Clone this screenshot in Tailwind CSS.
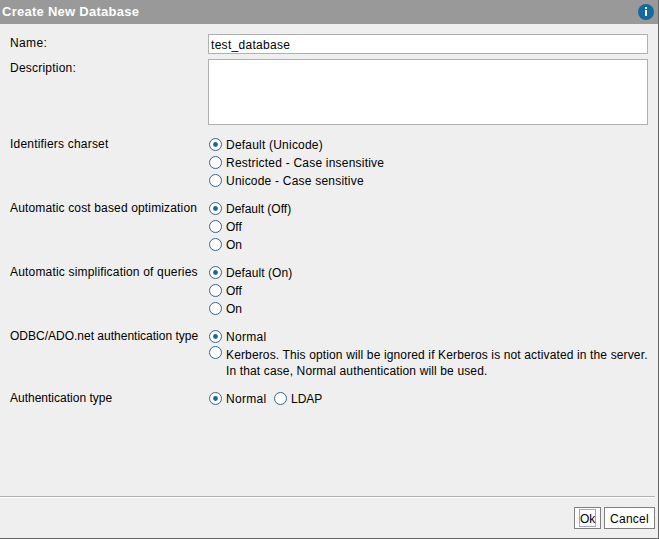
<!DOCTYPE html>
<html lang="en">
<head>
<meta charset="utf-8">
<title>Create New Database</title>
<script src="https://cdn.jsdelivr.net/npm/@tailwindcss/browser@4"></script>
</head>
<body class="bg-[#efefef]">
<svg class="hidden">
  <symbol id="off" viewBox="0 0 13 13"><circle cx="6.5" cy="6.5" r="6" fill="#fff" stroke="#34648f" /></symbol>
  <symbol id="on" viewBox="0 0 13 13"><circle cx="6.5" cy="6.5" r="6" fill="#fff" stroke="#34648f" /><circle cx="6.5" cy="6.5" r="2.4" fill="#136a9f" /></symbol>
</svg>
<div class="flex h-[539px] w-[659px] flex-col overflow-hidden border-r border-b border-[#666] bg-[#efefef] font-['Liberation_Sans',Arial,sans-serif] text-[12px] text-black whitespace-nowrap">
  <header class="flex h-6 shrink-0 items-center justify-between bg-[#999] pr-1 pl-[2px]">
    <h1 class="text-[13px] leading-6 font-bold tracking-[0.26px] text-white">Create New Database</h1>
    <svg class="size-4" viewBox="0 0 16 16"><circle cx="8" cy="8" r="8" fill="#136a9f"/><path d="M7 3h2v2H7zM7 6h2v6H7z" fill="#fff"/></svg>
  </header>
  <main class="flex grow flex-col pt-[10px] pl-[10px]">
    <div class="flex h-5"><div class="w-[198px] leading-[18px] tracking-[0.35px]">Name:</div><div class="w-[440px] border border-[#b0b0b0] bg-white pl-[2px] leading-5 tracking-[0.3px]">test_database</div></div>
    <div class="mt-[5px] flex h-[66px]"><div class="w-[198px] leading-[18px] tracking-[0.22px]">Description:</div><div class="w-[440px] border border-[#b0b0b0] bg-white"></div></div>
    <div class="mt-[11px] flex h-[54px]">
      <div class="w-[199px] leading-4 tracking-[0.2px]">Identifiers charset</div>
      <div class="leading-[18px] tracking-[0.21px]">
        <div class="flex gap-1"><svg class="mt-[2px] size-[13px]"><use href="#on"/></svg><span>Default (Unicode)</span></div>
        <div class="flex gap-1"><svg class="mt-[2px] size-[13px]"><use href="#off"/></svg><span>Restricted - Case insensitive</span></div>
        <div class="flex gap-1"><svg class="mt-[2px] size-[13px]"><use href="#off"/></svg><span>Unicode - Case sensitive</span></div>
      </div>
    </div>
    <div class="mt-[10px] flex h-[54px]">
      <div class="w-[199px] leading-4 tracking-[0.15px]">Automatic cost based optimization</div>
      <div class="leading-[18px]">
        <div class="flex gap-1"><svg class="mt-[2px] size-[13px]"><use href="#on"/></svg><span>Default (Off)</span></div>
        <div class="flex gap-1"><svg class="mt-[2px] size-[13px]"><use href="#off"/></svg><span>Off</span></div>
        <div class="flex gap-1"><svg class="mt-[2px] size-[13px]"><use href="#off"/></svg><span>On</span></div>
      </div>
    </div>
    <div class="mt-[10px] flex h-[54px]">
      <div class="w-[199px] leading-4 tracking-[0.18px]">Automatic simplification of queries</div>
      <div class="leading-[18px]">
        <div class="flex gap-1"><svg class="mt-[2px] size-[13px]"><use href="#on"/></svg><span class="tracking-[0.08px]">Default (On)</span></div>
        <div class="flex gap-1"><svg class="mt-[2px] size-[13px]"><use href="#off"/></svg><span>Off</span></div>
        <div class="flex gap-1"><svg class="mt-[2px] size-[13px]"><use href="#off"/></svg><span>On</span></div>
      </div>
    </div>
    <div class="mt-[10px] flex h-[52px]">
      <div class="w-[199px] leading-4">ODBC/ADO.net authentication type</div>
      <div>
        <div class="flex h-[18px] gap-1 leading-[18px]"><svg class="mt-[2px] size-[13px]"><use href="#on"/></svg><span class="tracking-[0.3px]">Normal</span></div>
        <div class="flex gap-1 leading-4"><svg class="size-[13px] shrink-0"><use href="#off"/></svg><span class="pt-px tracking-[0.135px]">Kerberos. This option will be ignored if Kerberos is not activated in the server.<br>In that case, Normal authentication will be used.</span></div>
      </div>
    </div>
    <div class="mt-[10px] flex h-[18px]">
      <div class="w-[199px] leading-4">Authentication type</div>
      <div class="flex leading-[18px]">
        <div class="flex w-[65px] gap-1"><svg class="mt-[2px] size-[13px]"><use href="#on"/></svg><span class="tracking-[0.3px]">Normal</span></div>
        <div class="flex gap-1"><svg class="mt-[2px] size-[13px]"><use href="#off"/></svg><span>LDAP</span></div>
      </div>
    </div>
  </main>
  <footer class="h-[42px] shrink-0 pr-[3px]">
    <div class="h-[2px] border-t border-[#b0b0b0] bg-white"></div>
    <div class="mt-[9px] flex justify-end gap-[3px]">
      <button class="flex h-[22px] w-[27px] items-center justify-center border border-[#808080] bg-white"><span class="h-[18px] w-[17px] border border-[#a3a3d1] text-center leading-[18px]">Ok</span></button>
      <button class="h-[22px] w-[51px] border border-[#808080] bg-white pt-px leading-5 tracking-[0.25px]">Cancel</button>
    </div>
  </footer>
</div>
</body>
</html>
